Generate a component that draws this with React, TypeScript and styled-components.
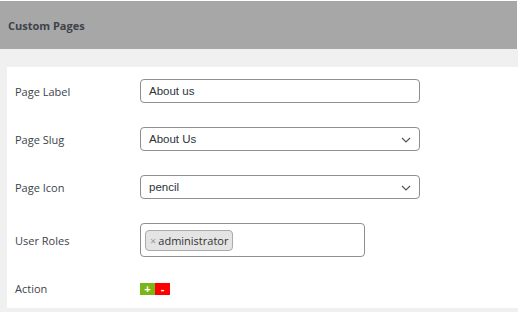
import styled, { createGlobalStyle } from "styled-components";

const GlobalStyle = createGlobalStyle`
  body {
    margin: 0;
    background: #f0f0f0;
    font-family: "Open Sans", "Noto Sans", sans-serif;
  }
`;

const Header = styled.header`
  height: 48px;
  display: flex;
  align-items: center;
  padding-left: 8px;
  background: #a7a7a7;
  border-top: 1px solid #fff;
  border-right: 1px solid #fff;
  font-size: 11px;
  font-weight: 700;
  color: #3c434a;
`;

const Content = styled.main`
  padding: 18px 0 4px 7px;
`;

const Panel = styled.section`
  display: flex;
  flex-direction: column;
  background: #fff;
  padding-bottom: 12px;
`;

const Row = styled.div<{ $last?: boolean }>`
  display: grid;
  grid-template-columns: 125px 1fr;
  align-items: center;
  padding: 12px 0 ${(p) => (p.$last ? 0 : 12)}px 8px;
`;

const Label = styled.label`
  font-size: 11px;
  color: #3c434a;
`;

const Field = styled.div`
  position: relative;
  box-sizing: border-box;
  width: 280px;
  height: 24px;
  display: flex;
  align-items: center;
  padding: 0 8px;
  border: 1px solid #8c8f94;
  border-radius: 4px;
  font-family: "Liberation Sans", Arial, sans-serif;
  font-size: 11.5px;
  color: #2c3338;
`;

const Chevron = styled.svg`
  position: absolute;
  right: 8px;
  top: 9px;
`;

const TagBox = styled.div`
  box-sizing: border-box;
  width: 225px;
  height: 34px;
  display: flex;
  align-items: center;
  padding: 0 4px;
  border: 1px solid #8c8f94;
  border-radius: 4px;
`;

const Tag = styled.span`
  display: inline-flex;
  align-items: center;
  gap: 2px;
  height: 21px;
  box-sizing: border-box;
  padding: 0 4px;
  background: #e4e4e4;
  border: 1px solid #aaa;
  border-radius: 4px;
  font-size: 11px;
  color: #333;
`;

const TagRemove = styled.span`
  color: #999;
  font-size: 11px;
`;

const Actions = styled.div`
  display: flex;
`;

const ActionButton = styled.button<{ $color: string }>`
  width: 15px;
  height: 12px;
  padding: 0;
  border: 0;
  background: ${(p) => p.$color};
  color: #fff;
  font-family: "Liberation Sans", Arial, sans-serif;
  font-size: 11px;
  font-weight: 700;
  line-height: 12px;
`;

function Select({ value }: { value: string }) {
  return (
    <Field>
      {value}
      <Chevron width="10" height="6" viewBox="0 0 10 6">
        <path d="M1 1l4 4 4-4" fill="none" stroke="#50575e" strokeWidth="1.2" />
      </Chevron>
    </Field>
  );
}

export default function App() {
  return (
    <>
      <GlobalStyle />
      <Header>Custom Pages</Header>
      <Content>
        <Panel>
          <Row>
            <Label>Page Label</Label>
            <Field>About us</Field>
          </Row>
          <Row>
            <Label>Page Slug</Label>
            <Select value="About Us" />
          </Row>
          <Row>
            <Label>Page Icon</Label>
            <Select value="pencil" />
          </Row>
          <Row>
            <Label>User Roles</Label>
            <TagBox>
              <Tag>
                <TagRemove>×</TagRemove>administrator
              </Tag>
            </TagBox>
          </Row>
          <Row $last>
            <Label>Action</Label>
            <Actions>
              <ActionButton $color="#7cb518">+</ActionButton>
              <ActionButton $color="#ff0000">-</ActionButton>
            </Actions>
          </Row>
        </Panel>
      </Content>
    </>
  );
}
